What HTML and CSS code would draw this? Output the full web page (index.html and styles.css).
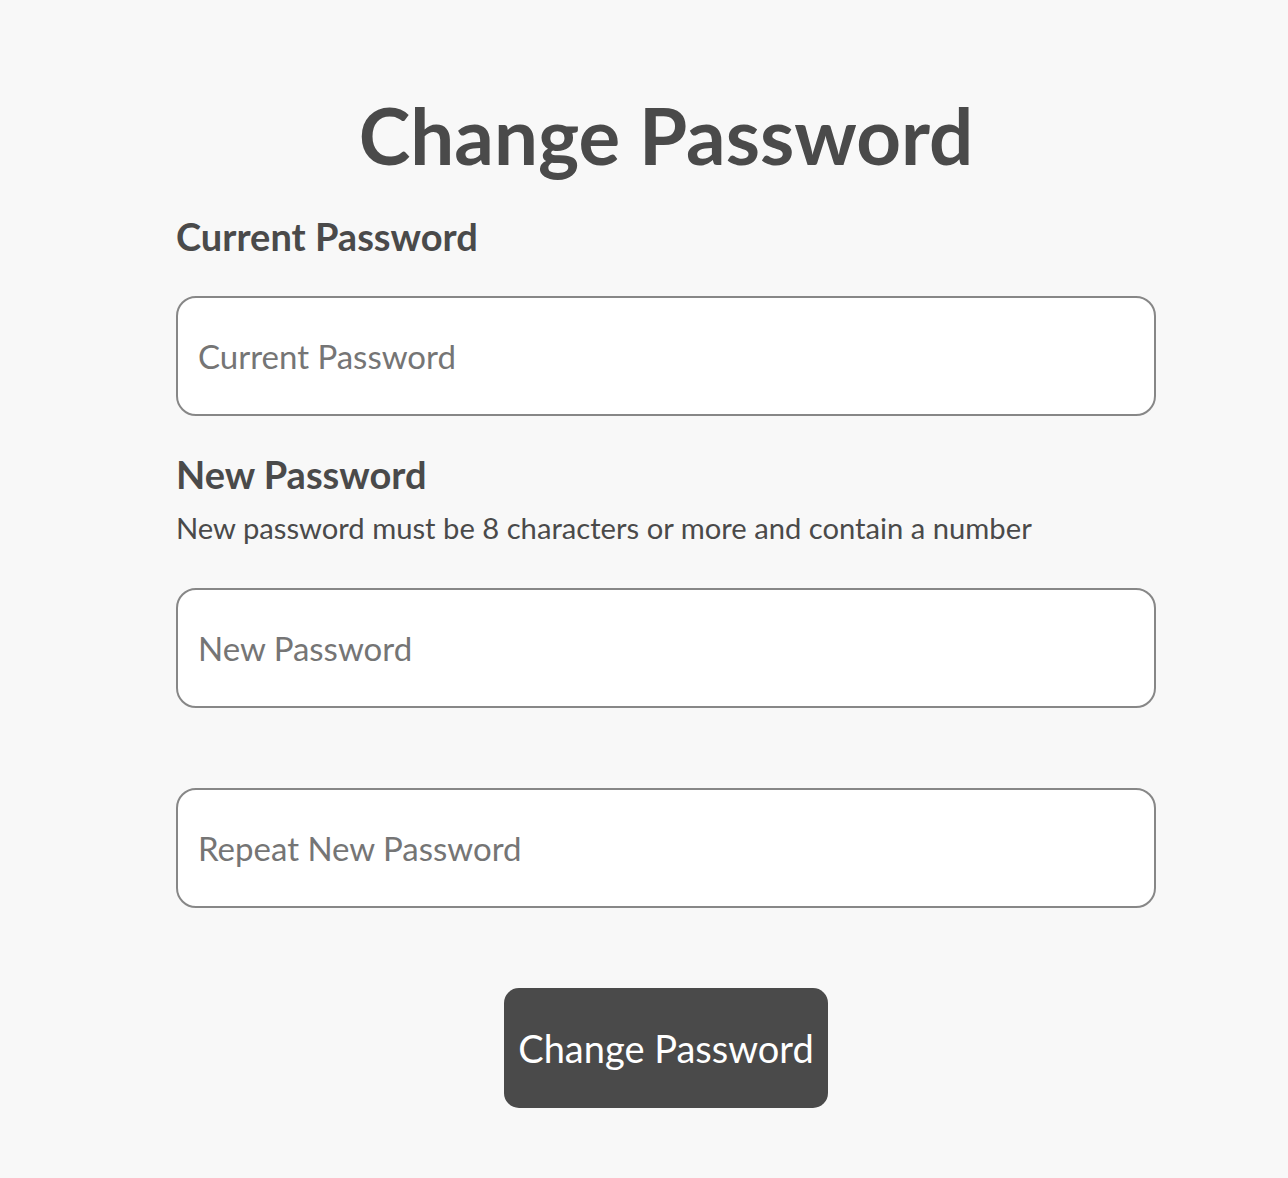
FILE: index.html
```html
<!DOCTYPE html>
<html lang="en">
<head>
    <meta charset="UTF-8">
    <meta name="viewport" content="width=device-width, initial-scale=1.0">
    <title>Change Password</title>

    <link rel="stylesheet" href="styles.css">
</head>
<body>
    <div class="page">
        <h1 class="title">Change Password</h1>

        <form class="password-form">
            <label class="field-label" for="currentPassword">Current Password</label>
            <input class="field-input" type="password" id="currentPassword" placeholder="Current Password">

            <label class="field-label label-new" for="newPassword">New Password</label>
            <p class="field-hint">New password must be 8 characters or more and contain a number</p>
            <input class="field-input input-new" type="password" id="newPassword" placeholder="New Password">

            <input class="field-input input-repeat" type="password" id="repeatPassword" placeholder="Repeat New Password">

            <button class="submit-btn" type="button">Change Password</button>
        </form>
    </div>
</body>
</html>
```

FILE: styles.css
```css
body {
    margin: 0;
    font-family: Lato, "Open Sans", sans-serif;
    background: #f8f8f8;
    color: #4a4a4a;
}

.page {
    width: 980px;
    margin-left: 176px;
    padding-top: 88px;
}

.title {
    margin: 0;
    font-size: 78px;
    font-weight: 700;
    line-height: 94px;
    text-align: center;
}

.password-form {
    display: flex;
    flex-direction: column;
}

.field-label {
    font-size: 38px;
    font-weight: 700;
    line-height: 44px;
    margin-top: 32px;
}

.label-new {
    margin-top: 36px;
}

.field-hint {
    margin: 14px 0 0 0;
    font-size: 29.2px;
    line-height: 36px;
}

.field-input {
    box-sizing: border-box;
    height: 120px;
    margin-top: 38px;
    padding: 0 20px;
    border: 2px solid #878787;
    border-radius: 20px;
    background: white;
    font-family: inherit;
    font-size: 33px;
    color: #4a4a4a;
}

.field-input::placeholder {
    color: #757575;
}

.input-new {
    margin-top: 42px;
}

.input-repeat {
    margin-top: 80px;
}

.submit-btn {
    align-self: center;
    width: 324px;
    height: 120px;
    margin-top: 80px;
    border: none;
    border-radius: 15px;
    background: #4a4a4a;
    color: white;
    font-family: inherit;
    font-size: 38px;
    cursor: pointer;
}
```
